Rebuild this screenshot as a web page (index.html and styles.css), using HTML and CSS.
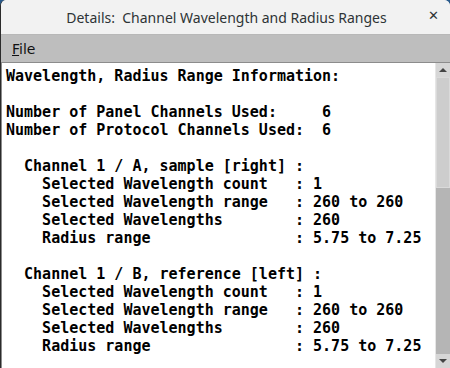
FILE: index.html
```html
<!DOCTYPE html>
<html lang="en">
<head>
  <meta charset="UTF-8">
  <title>Details: Channel Wavelength and Radius Ranges</title>
  <link rel="stylesheet" href="styles.css">
</head>
<body>
  <div class="window">
    <div class="titlebar">
      <span class="title">Details:&nbsp; Channel Wavelength and Radius Ranges</span>
      <span class="close">&#x2715;</span>
    </div>
    <div class="menubar">
      <span class="menu"><u>F</u>ile</span>
    </div>
    <div class="content">
      <pre class="report">Wavelength, Radius Range Information:

Number of Panel Channels Used:     6
Number of Protocol Channels Used:  6

  Channel 1 / A, sample [right] :
    Selected Wavelength count   : 1
    Selected Wavelength range   : 260 to 260
    Selected Wavelengths        : 260
    Radius range                : 5.75 to 7.25

  Channel 1 / B, reference [left] :
    Selected Wavelength count   : 1
    Selected Wavelength range   : 260 to 260
    Selected Wavelengths        : 260
    Radius range                : 5.75 to 7.25</pre>
      <div class="scrollbar">
        <div class="arrow up"></div>
        <div class="thumb"></div>
        <div class="trough"></div>
        <div class="arrow down"></div>
      </div>
    </div>
  </div>
</body>
</html>
```

FILE: styles.css
```css
html, body {
  margin: 0;
  padding: 0;
  background: #2a5b8c;
}
.window {
  width: 450px;
  height: 368px;
  display: flex;
  flex-direction: column;
  background: #f0f0f0;
  border-radius: 6px 6px 0 0;
  overflow: hidden;
  box-sizing: border-box;
  border-left: 1px solid #2b2b2b;
}
.titlebar {
  height: 34px;
  flex: none;
  display: flex;
  align-items: center;
  justify-content: center;
  position: relative;
  background: #f2f2f2;
  border-bottom: 1px solid #b8b8b8;
  font-family: "Noto Sans", sans-serif;
  font-size: 14px;
  color: #2e3436;
}
.title {
  padding-left: 2px;
}
.close {
  position: absolute;
  right: 11px;
  top: 8px;
  font-family: "DejaVu Sans", sans-serif;
  font-size: 13px;
  font-weight: bold;
  color: #2e3436;
}
.menubar {
  height: 27px;
  flex: none;
  display: flex;
  align-items: center;
  background: #bebebe;
  border-bottom: 1px solid #8c8c8c;
  padding-left: 11px;
  font-family: "DejaVu Sans", sans-serif;
  font-size: 14px;
  color: #111;
}
.content {
  flex: 1;
  display: flex;
  min-height: 0;
}
.report {
  flex: 1;
  margin: 0;
  padding: 4px 0 0 4px;
  background: #fff;
  border-left: 1px solid #8c8c8c;
  overflow: hidden;
  font-family: "DejaVu Sans Mono", monospace;
  font-weight: bold;
  font-size: 15px;
  line-height: 18px;
  color: #000;
}
.scrollbar {
  width: 14px;
  flex: none;
  display: flex;
  flex-direction: column;
  background: #b5b5b5;
  border-left: 1px solid #e6e6e6;
}
.arrow {
  height: 14px;
  flex: none;
  background: #d6d6d6;
  display: flex;
  align-items: center;
  justify-content: center;
}
.arrow::after {
  content: "";
  border-left: 4px solid transparent;
  border-right: 4px solid transparent;
}
.up::after {
  border-bottom: 4px solid #444;
}
.down::after {
  border-top: 4px solid #444;
}
.thumb {
  height: 111px;
  flex: none;
  background: #cdcdcd;
  border: 1px solid #dadada;
  box-sizing: border-box;
}
.trough {
  flex: 1;
}
```
